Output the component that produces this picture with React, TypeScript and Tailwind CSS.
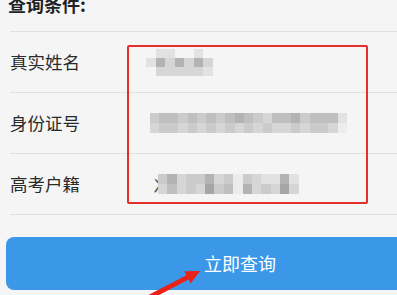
import React from 'react';

const palette: Record<string, string> = {
    '0': 'transparent',
    '1': '#ececec',
    '2': '#e2e2e2',
    '3': '#d6d6d6',
    '4': '#cbcbcb',
    '5': '#bfbfbf',
    '6': '#b3b3b3',
    '7': '#a6a6a6',
    '8': '#9a9a9a',
};

interface MosaicProps {
    rows: string[];
    cellW: number;
    cellH: number;
}

// 打码的值，用灰色方块拼出来
const Mosaic: React.FC<MosaicProps> = ({ rows, cellW, cellH }) => (
    <div className="flex flex-col">
        {rows.map((row, i) => (
            <div key={i} className="flex">
                {row.split('').map((c, j) => (
                    <div key={j} style={{ width: cellW, height: cellH, background: palette[c] }} />
                ))}
            </div>
        ))}
    </div>
);

const rowsData = [
    {
        label: '真实姓名',
        offset: 'ml-[1px]',
        mosaic: ['0220020', '2636363', '0333332'],
        cellW: 9.5,
        cellH: 9,
    },
    {
        label: '身份证号',
        offset: 'ml-[5px]',
        mosaic: ['455454545654355645552', '344343434343433434431'],
        cellW: 9.4,
        cellH: 10,
    },
];

const App: React.FC = () => {
    return (
        <div
            className="relative w-[397px] h-[295px] overflow-hidden bg-[#f5f5f5] text-[#2a2a2a]"
            style={{ fontFamily: '"Noto Sans CJK SC", "Noto Sans", sans-serif' }}
        >
            <div className="-mt-[8px] h-[39px] pl-[8px] text-[18px] font-bold leading-[24px] text-[#222]">查询条件:</div>

            <div className="ml-[10px] border-b border-[#e0e0e0]">
                {rowsData.map((r) => (
                    <div key={r.label} className="flex h-[61px] items-center border-t border-[#e0e0e0]">
                        <span className="w-[135px] text-[17.5px] leading-none">{r.label}</span>
                        <div className={r.offset}>
                            <Mosaic rows={r.mosaic} cellW={r.cellW} cellH={r.cellH} />
                        </div>
                    </div>
                ))}
                <div className="flex h-[61px] items-center border-t border-[#e0e0e0]">
                    <span className="w-[135px] text-[17.5px] leading-none">高考户籍</span>
                    <div className="ml-[8px] flex items-center">
                        <span className="w-[5px] overflow-hidden text-[17px] leading-none text-[#555]">冫</span>
                        <Mosaic rows={['463446341432262', '353437451634373']} cellW={9.4} cellH={10} />
                    </div>
                </div>
            </div>

            <button className="mt-[22px] ml-[6px] flex h-[53px] w-[468px] items-center justify-center rounded-[8px] bg-[#3b97e8] text-[18px] text-white">
                立即查询
            </button>

            {/* 红框标注 */}
            <div className="absolute left-[127px] top-[45px] h-[159px] w-[241px] rounded-[2px] border-2 border-[#e3302b]" />

            {/* 红色箭头 */}
            <svg className="absolute left-0 top-0" width="397" height="295" viewBox="0 0 397 295">
                <polygon
                    points="200,271 190.7,283.6 188.6,279.6 149.1,300.2 146.9,295.8 186.4,275.2 184.3,271.2"
                    fill="#ea2118"
                />
            </svg>
        </div>
    );
};

export default App;
